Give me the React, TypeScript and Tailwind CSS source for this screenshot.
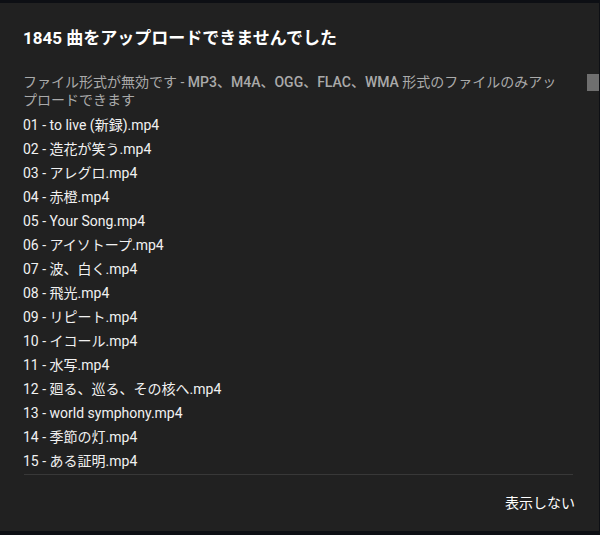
import React from "react";

const files = [
  "01 - to live (新録).mp4",
  "02 - 造花が笑う.mp4",
  "03 - アレグロ.mp4",
  "04 - 赤橙.mp4",
  "05 - Your Song.mp4",
  "06 - アイソトープ.mp4",
  "07 - 波、白く.mp4",
  "08 - 飛光.mp4",
  "09 - リピート.mp4",
  "10 - イコール.mp4",
  "11 - 水写.mp4",
  "12 - 廻る、巡る、その核へ.mp4",
  "13 - world symphony.mp4",
  "14 - 季節の灯.mp4",
  "15 - ある証明.mp4",
];

const font = { fontFamily: 'Roboto, "Noto Sans CJK JP", sans-serif' };

export default function App() {
  return (
    <div
      className="w-[600px] h-[535px] bg-[#0d0f14] pt-[3px] pr-[1px] pb-[4px] overflow-hidden"
      style={font}
    >
      <div className="h-[528px] bg-[#212121] flex flex-col">
        <h1 className="pl-[23px] pt-[23px] text-[17px] leading-[24px] font-bold text-white">
          1845 曲をアップロードできませんでした
        </h1>
        <div className="relative mt-[23px] h-[401px] overflow-hidden">
          <div className="pl-[23px] pr-[38px]">
            <p className="text-[14px] leading-[18px] text-[#aaaaaa]">
              ファイル形式が無効です - <span className="font-medium">MP3、M4A、OGG、FLAC、WMA</span> 形式のファイルのみアップロードできます
            </p>
            <ul className="mt-[4px]">
              {files.map((f) => (
                <li key={f} className="text-[14px] leading-[24px] text-[#f1f1f1]">
                  {f}
                </li>
              ))}
            </ul>
          </div>
          <div className="absolute right-0 top-[1px] w-[12px] h-[17px] bg-[#6f6f6f]" />
        </div>
        <div className="ml-[24px] mr-[26px] h-px bg-[#383838]" />
        <div className="flex justify-end pr-[24px] pt-[10px]">
          <button className="h-[36px] px-0 text-[14px] font-normal text-white">
            表示しない
          </button>
        </div>
      </div>
    </div>
  );
}
